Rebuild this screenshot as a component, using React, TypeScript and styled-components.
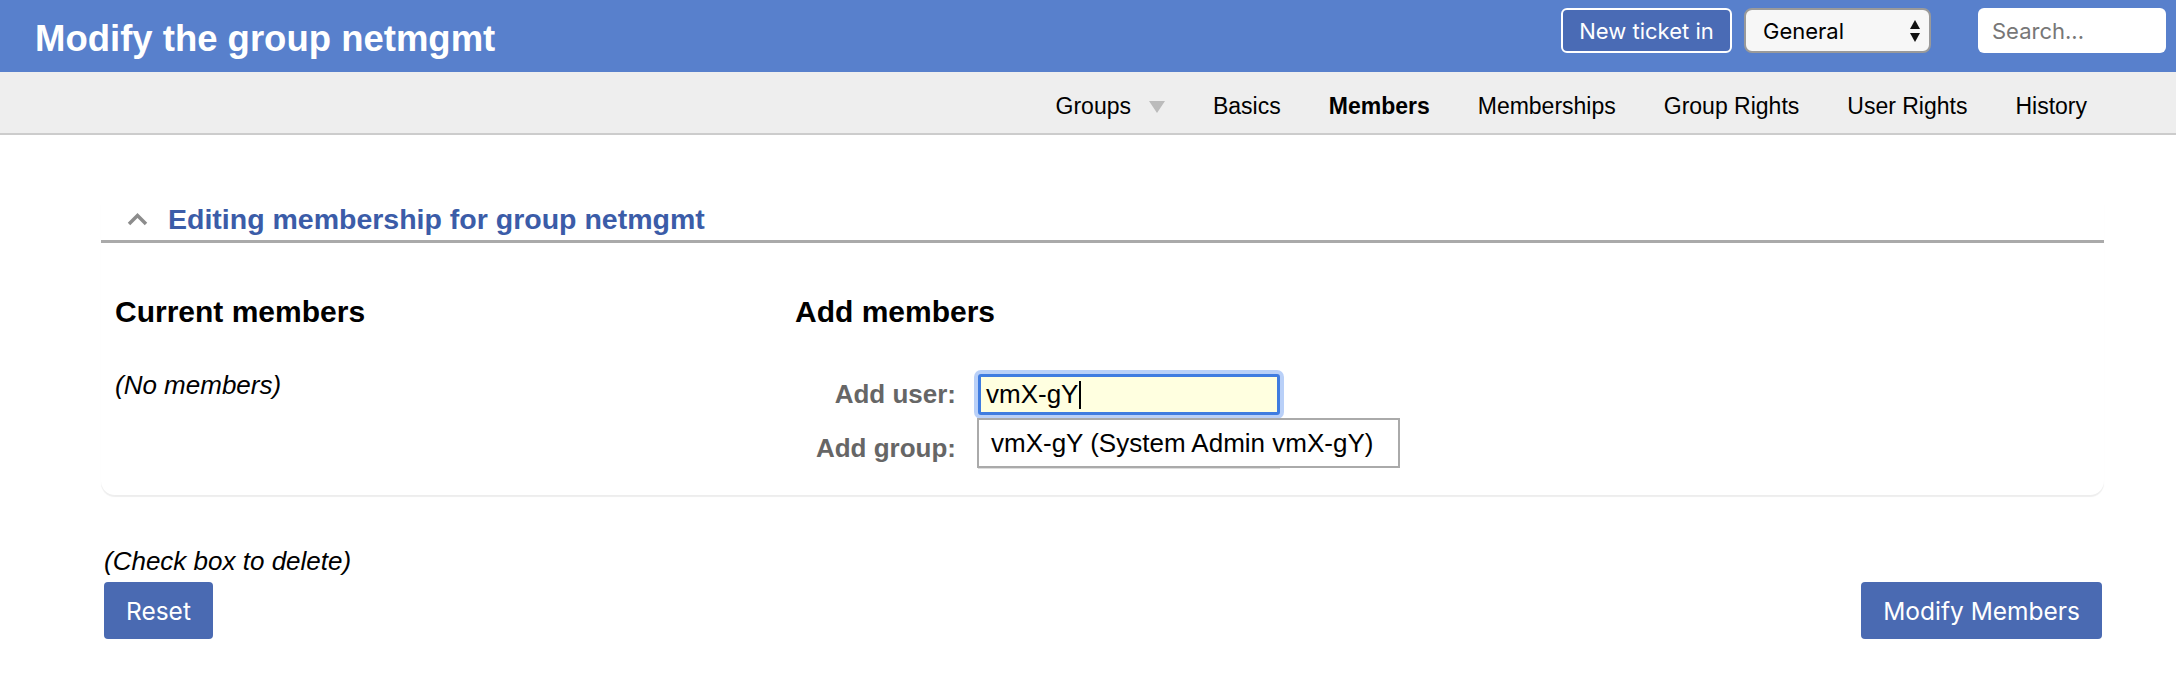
import styled, { createGlobalStyle } from "styled-components";

const GlobalStyle = createGlobalStyle`
  html, body {
    margin: 0;
    padding: 0;
    background: #ffffff;
  }
  body {
    font-family: "Liberation Sans", Arial, Helvetica, sans-serif;
    color: #000;
  }
  * {
    box-sizing: border-box;
  }
`;

const Header = styled.header`
  height: 72px;
  background: #5880cc;
  display: flex;
  align-items: flex-start;
  padding: 0 10px 0 35px;
`;

const PageTitle = styled.h1`
  flex: 1;
  margin: 19px 0 0;
  font-size: 36.5px;
  font-weight: bold;
  color: #fff;
  line-height: 40px;
`;

const Tools = styled.div`
  margin-top: 8px;
  display: flex;
  align-items: center;
  font-family: "Inter", "Liberation Sans", sans-serif;
  font-size: 22px;
`;

const NewTicketButton = styled.div`
  height: 45px;
  width: 171px;
  display: flex;
  align-items: center;
  justify-content: center;
  border: 2px solid #fff;
  border-radius: 6px;
  background: #4a6bb5;
  color: #fff;
`;

const SelectBox = styled.div`
  margin-left: 12px;
  height: 45px;
  width: 187px;
  display: flex;
  align-items: center;
  justify-content: space-between;
  padding: 0 8px 0 17px;
  background: #f7f7f7;
  border: 2px solid #9a9a9a;
  border-radius: 8px;
  color: #000;
`;

const SearchBox = styled.div`
  margin-left: 47px;
  height: 45px;
  width: 188px;
  display: flex;
  align-items: center;
  padding: 0 14px;
  background: #fff;
  border-radius: 6px;
  color: #777;
`;

const Nav = styled.nav`
  height: 63px;
  background: #eeeeee;
  border-bottom: 2px solid #cccccc;
  display: flex;
  justify-content: flex-end;
  align-items: center;
  padding: 8px 65px 0 0;
`;

const NavItem = styled.div<{ $active?: boolean }>`
  padding: 0 24px;
  font-size: 23px;
  font-weight: ${(p) => (p.$active ? "bold" : "normal")};
  color: #000;
  display: flex;
  align-items: center;
`;

const NavArrow = styled.span`
  margin-left: 18px;
  width: 0;
  height: 0;
  border-left: 8px solid transparent;
  border-right: 8px solid transparent;
  border-top: 12px solid #bbbbbb;
`;

const Main = styled.main`
  padding: 68px 72px 0 101px;
`;

const Panel = styled.section`
  border-radius: 0 0 14px 14px;
  box-shadow: 0 2px 1px rgba(0, 0, 0, 0.07);
`;

const PanelTitle = styled.div`
  display: flex;
  align-items: center;
  gap: 20px;
  padding: 0 0 5px 26px;
  border-bottom: 3px solid #aaaaaa;
`;

const PanelTitleText = styled.span`
  font-size: 28.5px;
  line-height: 32px;
  font-weight: bold;
  color: #3b5ca8;
`;

const PanelBody = styled.div`
  display: grid;
  grid-template-columns: 680px 1fr;
  padding: 51px 14px 26px;
`;

const Column = styled.div`
  display: flex;
  flex-direction: column;
`;

const ColumnTitle = styled.h3`
  margin: 0;
  font-size: 30px;
  line-height: 36px;
  font-weight: bold;
`;

const Note = styled.div<{ $top: number }>`
  margin-top: ${(p) => p.$top}px;
  font-size: 26px;
  line-height: 32px;
  font-style: italic;
`;

const Form = styled.div`
  margin-top: 44px;
  display: flex;
  flex-direction: column;
  gap: 13px;
`;

const FormRow = styled.div`
  display: flex;
  align-items: center;
  gap: 22px;
`;

const Label = styled.label`
  width: 161px;
  text-align: right;
  font-size: 26px;
  font-weight: bold;
  color: #666;
`;

const InputWrap = styled.div`
  position: relative;
`;

const TextInput = styled.div<{ $focused?: boolean }>`
  width: 302px;
  height: 41px;
  display: flex;
  align-items: center;
  padding: 0 5px;
  font-size: 26px;
  background: ${(p) => (p.$focused ? "#ffffe0" : "#fff")};
  border: ${(p) => (p.$focused ? "3px solid #3f7ce0" : "2px solid #dddddd")};
  box-shadow: ${(p) =>
    p.$focused ? "0 0 0 4px rgba(100, 150, 240, 0.45)" : "none"};
  border-radius: ${(p) => (p.$focused ? "3px" : "0")};
`;

const Caret = styled.span`
  display: inline-block;
  width: 2px;
  height: 28px;
  background: #000;
  margin-left: 1px;
`;

const Suggestions = styled.div`
  position: absolute;
  top: calc(100% + 3px);
  left: -1px;
  width: 423px;
  height: 50px;
  display: flex;
  align-items: center;
  padding: 0 12px;
  background: #fff;
  border: 2px solid #aaaaaa;
  font-size: 26px;
  white-space: nowrap;
  z-index: 2;
`;

const Footer = styled.div`
  margin-top: 50px;
  padding: 0 2px 0 3px;
`;

const ButtonRow = styled.div`
  margin-top: 5px;
  display: flex;
  justify-content: space-between;
`;

const Button = styled.button`
  height: 57px;
  padding: 0 22px;
  border: none;
  border-radius: 4px;
  background: #4a6ab2;
  color: #fff;
  font-family: "Inter", "Liberation Sans", sans-serif;
  font-size: 24.5px;
`;

function UpDownArrows() {
  return (
    <svg width="12" height="26" viewBox="0 0 12 26">
      <polygon points="6,2 11,11 1,11" fill="#111" />
      <polygon points="6,24 11,15 1,15" fill="#111" />
    </svg>
  );
}

function ChevronUp() {
  return (
    <svg width="21" height="14" viewBox="0 0 21 14">
      <polyline
        points="2,12 10.5,3.5 19,12"
        fill="none"
        stroke="#8c8c8c"
        strokeWidth="3.5"
      />
    </svg>
  );
}

const navItems = ["Basics", "Members", "Memberships", "Group Rights", "User Rights", "History"];

export default function App() {
  return (
    <>
      <GlobalStyle />
      <Header>
        <PageTitle>Modify the group netmgmt</PageTitle>
        <Tools>
          <NewTicketButton>New ticket in</NewTicketButton>
          <SelectBox>
            <span>General</span>
            <UpDownArrows />
          </SelectBox>
          <SearchBox>Search...</SearchBox>
        </Tools>
      </Header>
      <Nav>
        <NavItem>
          Groups
          <NavArrow />
        </NavItem>
        {navItems.map((item) => (
          <NavItem key={item} $active={item === "Members"}>
            {item}
          </NavItem>
        ))}
      </Nav>
      <Main>
        <Panel>
          <PanelTitle>
            <ChevronUp />
            <PanelTitleText>Editing membership for group netmgmt</PanelTitleText>
          </PanelTitle>
          <PanelBody>
            <Column>
              <ColumnTitle>Current members</ColumnTitle>
              <Note $top={39}>(No members)</Note>
            </Column>
            <Column>
              <ColumnTitle>Add members</ColumnTitle>
              <Form>
                <FormRow>
                  <Label>Add user:</Label>
                  <InputWrap>
                    <TextInput $focused>
                      vmX-gY
                      <Caret />
                    </TextInput>
                    <Suggestions>vmX-gY (System Admin vmX-gY)</Suggestions>
                  </InputWrap>
                </FormRow>
                <FormRow>
                  <Label>Add group:</Label>
                  <InputWrap>
                    <TextInput />
                  </InputWrap>
                </FormRow>
              </Form>
            </Column>
          </PanelBody>
        </Panel>
        <Footer>
          <Note $top={0}>(Check box to delete)</Note>
          <ButtonRow>
            <Button>Reset</Button>
            <Button>Modify Members</Button>
          </ButtonRow>
        </Footer>
      </Main>
    </>
  );
}
